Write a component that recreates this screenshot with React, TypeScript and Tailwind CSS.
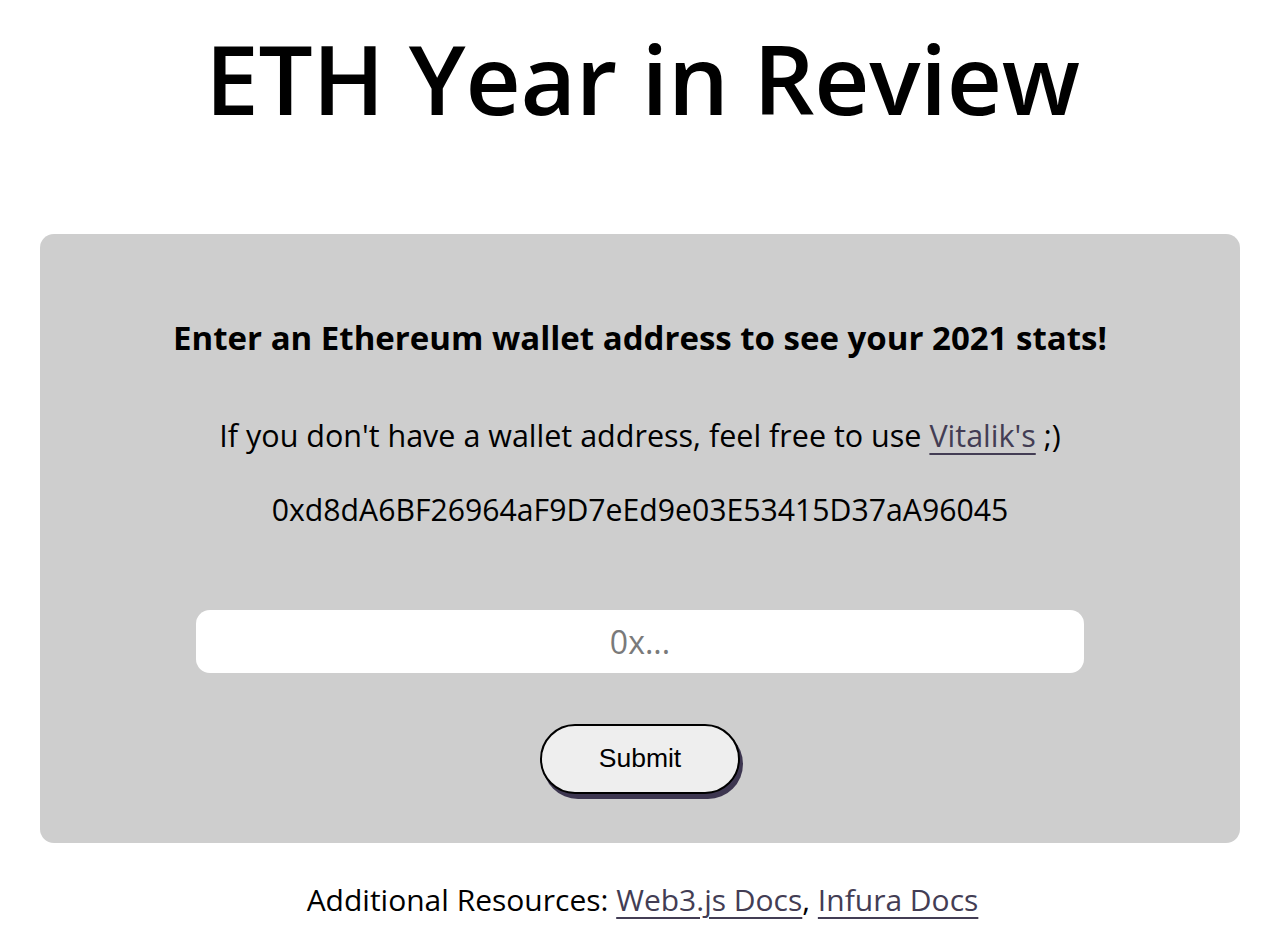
import React from "react";

export default function App() {
  return (
    <div className="min-h-[935px] bg-white text-black" style={{ fontFamily: '"Open Sans", "Noto Sans", sans-serif' }}>
      <h1 className="pt-[22px] text-center text-[96px] font-semibold leading-[112px] tracking-[-0.3px]">ETH Year in Review</h1>
      <div className="ml-[40px] mt-[100px] flex h-[609px] w-[1200px] flex-col items-center rounded-[14px] bg-[#cecece] pt-[84px]">
        <h2 className="text-[33px] font-bold leading-[40px]">Enter an Ethereum wallet address to see your 2021 stats!</h2>
        <p className="mt-[57px] text-[30.5px] leading-[40px]">
          If you don't have a wallet address, feel free to use{" "}
          <a href="#" className="text-[#433d54] underline underline-offset-[6px] decoration-2">Vitalik's</a> ;)
        </p>
        <p className="mt-[35px] text-[30.2px] leading-[40px]">0xd8dA6BF26964aF9D7eEd9e03E53415D37aA96045</p>
        <input
          className="mt-[80px] h-[63px] w-[888px] rounded-[14px] bg-white text-center text-[32px] outline-none placeholder:text-[#7a7a7a]"
          placeholder="0x..."
        />
        <button
          className="mt-[51px] h-[70px] w-[200px] rounded-full border-2 border-black bg-[#eeeeee] text-[26.5px] text-black shadow-[3px_5px_0_#3d3650]"
          style={{ fontFamily: '"Liberation Sans", Arial, sans-serif' }}
        >
          Submit
        </button>
      </div>
      <p className="mt-[37px] text-center text-[30px] leading-[40px]">
        Additional Resources:{" "}
        <a href="#" className="text-[#433d54] underline underline-offset-[6px] decoration-2">Web3.js Docs</a>,{" "}
        <a href="#" className="text-[#433d54] underline underline-offset-[6px] decoration-2">Infura Docs</a>
      </p>
    </div>
  );
}
